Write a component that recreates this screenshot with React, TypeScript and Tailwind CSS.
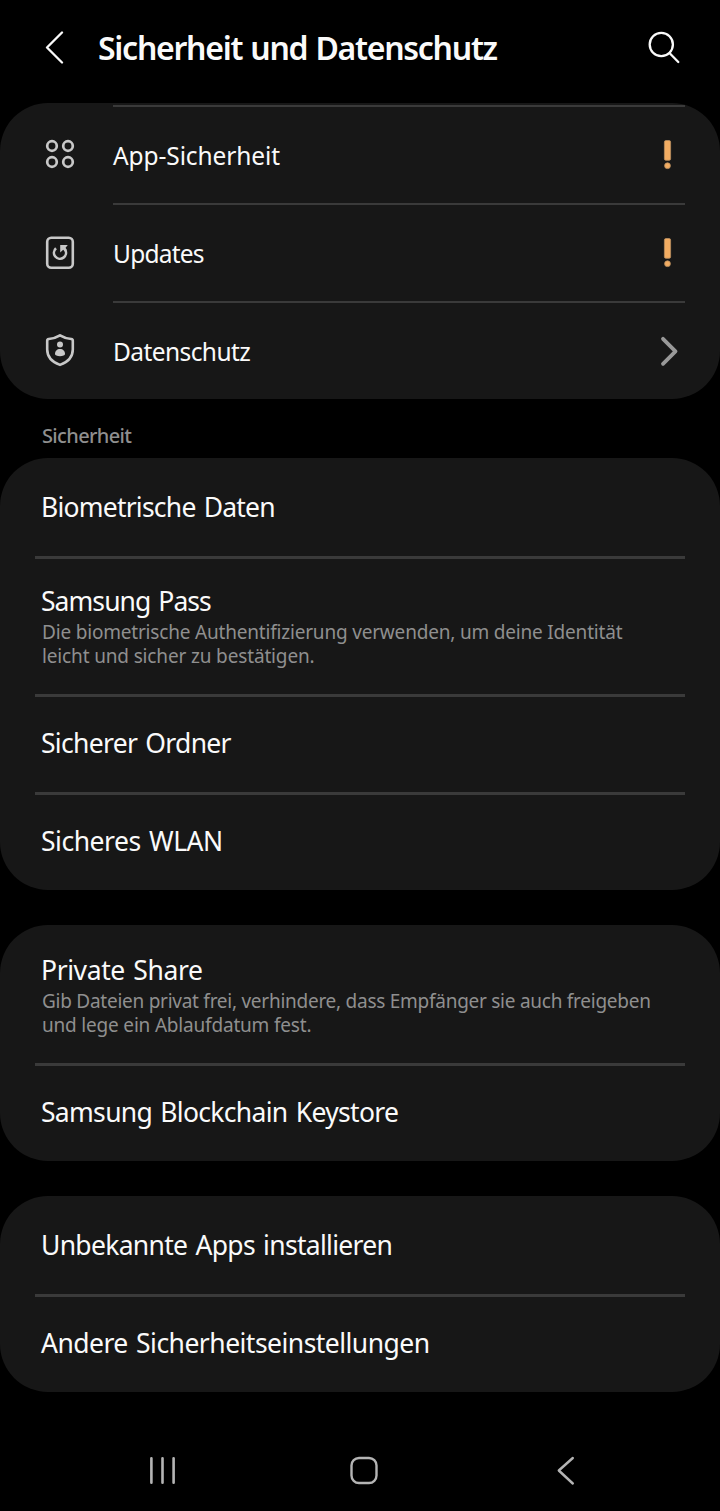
import React from 'react';
import clsx from 'clsx';

type Item = {
  title: string;
  tracking: string;
  lines?: { text: string; tracking: string }[];
};

const securityItems: Item[] = [
  { title: 'Biometrische Daten', tracking: 'tracking-[-0.78px]' },
  {
    title: 'Samsung Pass',
    tracking: 'tracking-[-0.94px]',
    lines: [
      { text: 'Die biometrische Authentifizierung verwenden, um deine Identität', tracking: 'tracking-[-0.19px]' },
      { text: 'leicht und sicher zu bestätigen.', tracking: 'tracking-[-0.15px]' },
    ],
  },
  { title: 'Sicherer Ordner', tracking: 'tracking-[-0.7px]' },
  { title: 'Sicheres WLAN', tracking: 'tracking-[-0.48px]' },
];

const sharingItems: Item[] = [
  {
    title: 'Private Share',
    tracking: 'tracking-[-0.4px]',
    lines: [
      { text: 'Gib Dateien privat frei, verhindere, dass Empfänger sie auch freigeben', tracking: 'tracking-[-0.26px]' },
      { text: 'und lege ein Ablaufdatum fest.', tracking: 'tracking-[-0.19px]' },
    ],
  },
  { title: 'Samsung Blockchain Keystore', tracking: 'tracking-[-0.69px]' },
];

const otherItems: Item[] = [
  { title: 'Unbekannte Apps installieren', tracking: 'tracking-[-0.7px]' },
  { title: 'Andere Sicherheitseinstellungen', tracking: 'tracking-[-0.53px]' },
];

const AppsIcon = () => (
  <svg width="32" height="34" viewBox="0 0 32 34" fill="none" stroke="#c8c8c8" strokeWidth="2.7">
    <circle cx="8" cy="8" r="4.8" />
    <circle cx="24" cy="8" r="4.8" />
    <circle cx="8" cy="24" r="4.8" />
    <circle cx="24" cy="24" r="4.8" />
  </svg>
);

const UpdatesIcon = () => (
  <svg width="32" height="34" viewBox="0 0 32 34" fill="none" stroke="#c8c8c8" strokeWidth="2.6">
    <rect x="3.2" y="1.7" width="25.6" height="30.1" rx="4" />
    <path d="M12 12.3a6 6 0 1 0 9 1.2" />
    <path d="M16.2 9h7.6l-2.2 2.8 1.2 2.4-2.2 1-1.4-1.4-3 2.6z" fill="#c8c8c8" stroke="none" />
  </svg>
);

const PrivacyIcon = () => (
  <svg width="32" height="34" viewBox="0 0 32 34" fill="none">
    <path
      d="M16 1.3c3.6 2.2 7.3 3.3 11.3 3.7q1.500.2 1.5 1.7v8.8c0 7.8-5.3 12.7-12.8 15.4-7.5-2.7-12.8-7.6-12.8-15.4V6.7q0-1.5 1.5-1.7c4-.4 7.7-1.500 11.3-3.7z"
      stroke="#c8c8c8"
      strokeWidth="2.6"
      strokeLinejoin="round"
    />
    <circle cx="16" cy="10.6" r="3" fill="#c8c8c8" />
    <path d="M11 20c0-3 2-5 5-5s5 2 5 5c0 1.4-2.2 2.2-5 2.2s-5-.8-5-2.2z" fill="#c8c8c8" />
  </svg>
);

const Warning = () => (
  <svg className="mr-[13px]" width="9" height="30" viewBox="0 0 9 30" fill="#f2ac62" stroke="#b98e60" strokeWidth="0.8">
    <rect x="1.4" y="0.5" width="6.2" height="19.8" rx="1.5" />
    <circle cx="4.5" cy="25.7" r="2.9" />
  </svg>
);

const Chevron = () => (
  <svg className="mr-[6px]" width="20" height="32" viewBox="0 0 20 32" fill="none" stroke="#999999" strokeWidth="3.8" strokeLinecap="round" strokeLinejoin="round">
    <path d="M4 3.8 16.5 16.3 4 28.8" />
  </svg>
);

const overview = [
  { label: 'App-Sicherheit', tracking: 'tracking-[-0.1px]', icon: AppsIcon, end: Warning },
  { label: 'Updates', tracking: 'tracking-[-0.78px]', icon: UpdatesIcon, end: Warning },
  { label: 'Datenschutz', tracking: 'tracking-[-0.58px]', icon: PrivacyIcon, end: Chevron },
];

const Group = ({ items, className }: { items: Item[]; className?: string }) => (
  <section className={clsx('rounded-[48px] bg-[#171717] px-[35px]', className)}>
    {items.map((item, index) => (
      <div
        key={item.title}
        className={clsx(
          'flex flex-col border-t-[3px] pl-[6px]',
          index === 0 ? 'border-transparent' : 'border-[#3a3a3a]',
          item.lines ? 'h-[138px] pt-[24px]' : 'h-[98px] justify-center pb-[3px]'
        )}
      >
        <h3 className={clsx('whitespace-nowrap text-[26.5px] leading-9 text-[#fafafa] [word-spacing:2px]', item.tracking)}>{item.title}</h3>
        {item.lines && (
          <p className="mt-px pl-px text-[19px] leading-6 text-[#8f8f8f]">
            {item.lines.map((line) => (
              <span key={line.text} className={clsx('block whitespace-nowrap', line.tracking)}>{line.text}</span>
            ))}
          </p>
        )}
      </div>
    ))}
  </section>
);

export default function App() {
  return (
    <div className="flex h-[1511px] w-[720px] flex-col bg-black font-['Noto_Sans',sans-serif]">
      <header className="mb-2 flex h-[95px] shrink-0 items-center pl-[44px] pr-[38px]">
        <svg width="22" height="34" viewBox="0 0 22 34" fill="none" stroke="#fafafa" strokeWidth="2.3" strokeLinecap="round" strokeLinejoin="round">
          <path d="M18 1.5 3 16.5 18 31.5" />
        </svg>
        <h1 className="ml-[32px] flex-1 whitespace-nowrap text-[32px] font-semibold leading-10 tracking-[-1.27px] text-[#fafafa] [word-spacing:1px]">
          Sicherheit und Datenschutz
        </h1>
        <svg width="36" height="36" viewBox="0 0 36 36" fill="none" stroke="#fafafa" strokeWidth="2.3" strokeLinecap="round">
          <circle cx="15.3" cy="14.5" r="11.6" />
          <path d="M23.7 23.2 32.3 32" />
        </svg>
      </header>

      <section className="rounded-[48px] bg-[#171717] px-[35px] pt-[2px]">
        {overview.map(({ label, tracking, icon: Icon, end: End }) => (
          <div key={label} className="flex h-[98px]">
            <div className="flex w-[78px] items-center pl-[9px] pt-[2px]">
              <Icon />
            </div>
            <div className="flex flex-1 items-center justify-between border-t-2 border-[#3a3a3a]">
              <span className={clsx('pt-px text-[24.5px] leading-8 text-[#fafafa]', tracking)}>{label}</span>
              <End />
            </div>
          </div>
        ))}
      </section>

      <h2 className="h-[59px] shrink-0 pl-[42px] pt-[21px] text-xl font-medium leading-8 tracking-[-0.65px] text-[#8f8f8f]">Sicherheit</h2>
      <Group items={securityItems} />
      <Group items={sharingItems} className="mt-[35px]" />
      <Group items={otherItems} className="mt-[35px]" />

      {/* System navigation bar */}
      <nav className="mt-[61px] flex items-center pl-[147px]">
        <svg width="32" height="34" viewBox="0 0 32 34" stroke="#b4b4b4" strokeWidth="2.6" strokeLinecap="round">
          <path d="M4.4 5.2v24.6M15.5 5.2v24.6M26.6 5.2v24.6" />
        </svg>
        <svg className="ml-[168.500px]" width="32" height="34" viewBox="0 0 32 34" fill="none" stroke="#b4b4b4" strokeWidth="2.4">
          <rect x="3.5" y="5" width="25" height="25" rx="7.5" />
        </svg>
        <svg className="ml-[175.500px]" width="22" height="34" viewBox="0 0 22 34" fill="none" stroke="#b4b4b4" strokeWidth="2.4" strokeLinecap="round" strokeLinejoin="round">
          <path d="M17.800 5 3.800 17.500 17.800 30.500" />
        </svg>
      </nav>
    </div>
  );
}
